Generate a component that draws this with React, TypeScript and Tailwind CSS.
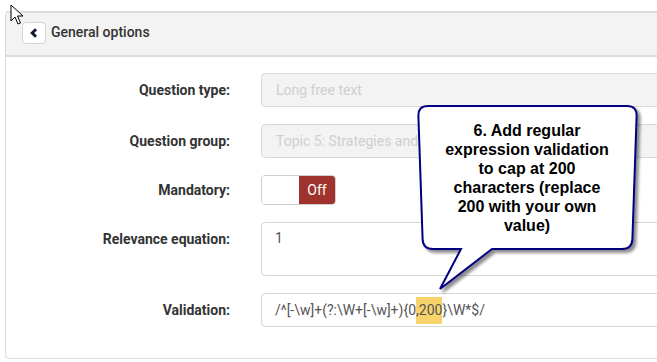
import React from 'react';

const rows = [
  { label: 'Question type:', kind: 'disabled', value: 'Long free text' },
  { label: 'Question group:', kind: 'disabled', value: 'Topic 5: Strategies and resources' },
  { label: 'Mandatory:', kind: 'toggle' },
  { label: 'Relevance equation:', kind: 'textarea', value: '1' },
  { label: 'Validation:', kind: 'validation' },
];

const Field: React.FC<{ kind: string; value?: string }> = ({ kind, value }) => {
  if (kind === 'disabled') {
    return (
      <div className="h-[34px] w-full rounded-l border border-[#dadada] bg-[#f3f3f3] pl-[14px] flex items-center text-[14px] text-[#cfcfcf]">
        {value}
      </div>
    );
  }
  if (kind === 'toggle') {
    return (
      <div className="h-[30px] w-[75px] rounded border border-[#cfcfcf] flex overflow-hidden">
        <div className="w-[37px] bg-white" />
        <div className="flex-1 bg-[#a0322d] text-white text-[14px] flex items-center justify-center">Off</div>
      </div>
    );
  }
  if (kind === 'textarea') {
    return (
      <div className="h-[54px] w-full rounded-l border border-[#d6d6d6] bg-white pl-[13px] pt-[5px] text-[14px] text-[#555]">
        {value}
      </div>
    );
  }
  return (
    <div className="h-[34px] w-full rounded-l border border-[#d6d6d6] bg-white pl-[13px] flex items-center text-[14px] text-[#555]">
      <span>/^[-\w]+(?:\W+[-\w]+){'{'}0</span>
      <span className="bg-[#f7d36c] h-[27px] flex items-center">,200</span>
      <span>{'}'}\W*$/</span>
    </div>
  );
};

const Callout: React.FC = () => (
  <div className="absolute inset-0 pointer-events-none">
    <svg width="657" height="362" className="absolute left-0 top-0">
      <defs>
        <filter id="sh" x="-10%" y="-10%" width="130%" height="130%">
          <feDropShadow dx="3" dy="3" stdDeviation="1.5" floodColor="#000" floodOpacity="0.45" />
        </filter>
      </defs>
      <path
        d="M428 106 H627 Q637 106 636.6 116 L632.4 239 Q632 249 622 249 H492 L440 289 L461 249 H433 Q423 249 422.6 239 L418.4 116 Q418 106 428 106 Z"
        fill="#fff"
        stroke="#000080"
        strokeWidth="2"
        filter="url(#sh)"
      />
    </svg>
    <div className="absolute left-[418px] top-[121px] w-[218px] text-center font-bold text-[16px] leading-[19px] text-black [font-family:'Liberation_Sans',Arial,sans-serif]">
      6. Add regular<br />
      expression validation<br />
      to cap at 200<br />
      characters (replace<br />
      200 with your own<br />
      value)
    </div>
  </div>
);

export default function App() {
  return (
    <div className="relative w-[657px] h-[362px] overflow-hidden bg-white [font-family:Roboto,'Liberation_Sans',sans-serif]">
      <div className="ml-[5px] mt-[11px] w-[720px] h-[348px] rounded-tl rounded-bl border border-[#dcdcdc] border-t-2">
        {/* Header */}
        <div className="h-[44px] bg-[#f3f3f3] border-b-2 border-[#dcdcdc] flex items-center pl-[16px] pb-[3px] gap-[5px]">
          <button className="w-[24px] h-[22px] bg-white border border-[#d4d4d4] rounded flex items-center justify-center">
            <svg width="10" height="10" viewBox="0 0 10 10">
              <path d="M7 1.2 L3.2 5 L7 8.8" fill="none" stroke="#0f1a2e" strokeWidth="3" />
            </svg>
          </button>
          <span className="text-[14px] font-medium text-[#333]">General options</span>
        </div>

        {/* Form */}
        <div className="pt-[16px] flex flex-col gap-[17px]">
          {rows.map((r) => (
            <div key={r.label} className={`flex gap-[31px] ${r.kind === 'textarea' ? 'items-start' : 'items-center'}`}>
              <div className={`w-[224px] shrink-0 text-right text-[14px] font-bold text-[#333] ${r.kind === 'textarea' ? 'pt-[7px]' : ''}`}>
                {r.label}
              </div>
              <div className="flex-1">
                <Field kind={r.kind} value={r.value} />
              </div>
            </div>
          ))}
        </div>
      </div>

      <Callout />

      {/* mouse cursor */}
      <svg width="14" height="22" viewBox="0 0 14 22" className="absolute left-[10px] top-[4px]">
        <path d="M1 1 L1 17 L5 13 L8 20 L10.5 19 L7.5 12 L13 12 Z" fill="#fff" stroke="#000" strokeWidth="1" strokeLinejoin="round" />
      </svg>
    </div>
  );
}
